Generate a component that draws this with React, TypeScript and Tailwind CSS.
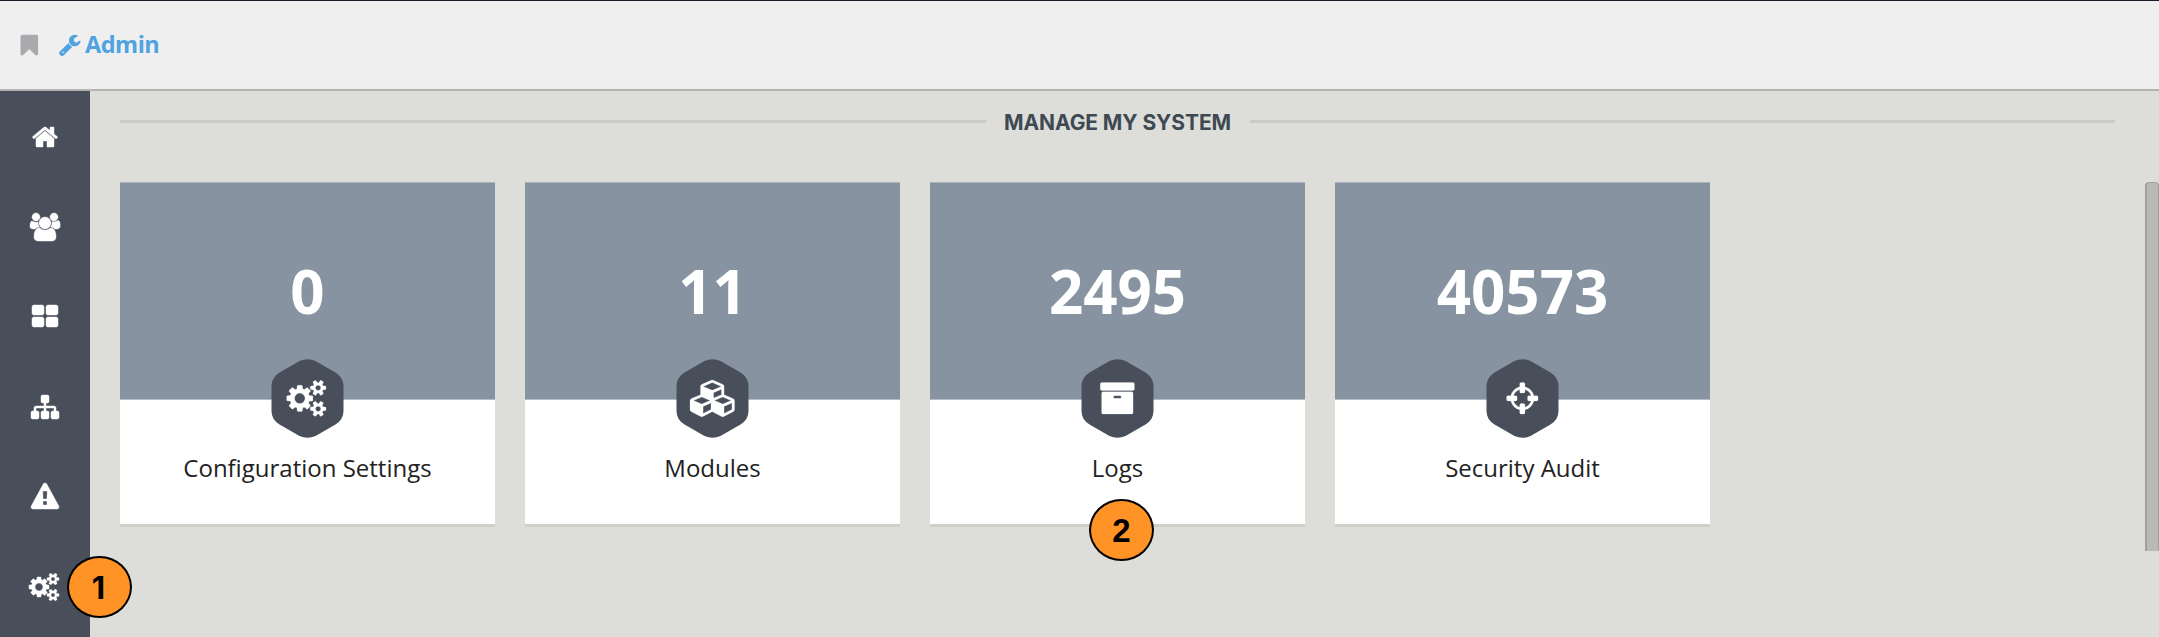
import React from 'react';

type Glyph = { w: number; d: string };

const glyphs: Record<string, Glyph> = {
  bookmark: {
    w: 1792,
    d: 'M1420 128q23 0 44 9 33 13 52.5 41t19.5 62v1289q0 34-19.5 62t-52.5 41q-19 8-44 8-48 0-83-32l-441-424-441 424q-36 33-83 33-23 0-44-9-33-13-52.5-41t-19.5-62v-1289q0-34 19.5-62t52.5-41q21-9 44-9h1048z',
  },
  wrench: {
    w: 1792,
    d: 'M448 1472q0-26-19-45t-45-19-45 19-19 45 19 45 45 19 45-19 19-45zm644-420l-682 682q-37 37-90 37-52 0-91-37l-106-108q-38-36-38-90 0-53 38-91l681-681q39 98 114.5 173.5t173.5 114.5zm634-435q0 39-23 106-47 134-164.5 217.5t-258.5 83.5q-185 0-316.5-131.5t-131.5-316.5 131.5-316.5 316.5-131.5q58 0 121.5 16.5t107.5 46.5q16 11 16 28t-16 28l-293 169v224l193 107q5-3 79-48.5t135.5-81 70.5-35.5q15 0 23.5 10t8.5 25z',
  },
  home: {
    w: 1792,
    d: 'M1472 992v480q0 26-19 45t-45 19h-384v-384h-256v384h-384q-26 0-45-19t-19-45v-480q0-1 .5-3t.5-3l575-474 575 474q1 2 1 6zm223-69l-62 74q-8 9-21 11h-3q-13 0-21-7l-692-577-692 577q-12 8-24 7-13-2-21-11l-62-74q-8-10-7-23.5t11-21.5l719-599q32-26 76-26t76 26l244 204v-195q0-14 9-23t23-9h192q14 0 23 9t9 23v408l219 182q10 8 11 21.5t-7 23.5z',
  },
  users: {
    w: 1920,
    d: 'M593 896q-162 5-265 128h-134q-82 0-138-40.5t-56-118.5q0-353 124-353 6 0 43.5 21t97.5 42.5 119 21.5q67 0 133-23-5 37-5 66 0 159 93 293zm1071 637q0 120-73 189.5t-194 69.5h-874q-121 0-194-69.5t-73-189.5q0-53 3.5-103.5t14-109 26.5-108.5 43-97.5 62-81 85.5-53.5 111.5-20q10 0 43 21.5t73 48 107 48 135 21.5 135-21.5 107-48 73-48 43-21.5q61 0 111.5 20t85.5 53.5 62 81 43 97.5 26.5 108.5 14 109 3.5 103.5zm-1024-1277q0 106-75 181t-181 75-181-75-75-181 75-181 181-75 181 75 75 181zm704 384q0 159-112.5 271.5t-271.5 112.5-271.5-112.5-112.5-271.5 112.5-271.5 271.5-112.5 271.5 112.5 112.5 271.5zm576 225q0 78-56 118.5t-138 40.5h-134q-103-123-265-128 93-134 93-293 0-29-5-66 66 23 133 23 59 0 119-21.5t97.5-42.5 43.5-21q124 0 124 353zm-128-609q0 106-75 181t-181 75-181-75-75-181 75-181 181-75 181 75 75 181z',
  },
  grid: {
    w: 1792,
    d: 'M832 1024v384q0 52-38 90t-90 38h-512q-52 0-90-38t-38-90v-384q0-52 38-90t90-38h512q52 0 90 38t38 90zm0-768v384q0 52-38 90t-90 38h-512q-52 0-90-38t-38-90v-384q0-52 38-90t90-38h512q52 0 90 38t38 90zm896 768v384q0 52-38 90t-90 38h-512q-52 0-90-38t-38-90v-384q0-52 38-90t90-38h512q52 0 90 38t38 90zm0-768v384q0 52-38 90t-90 38h-512q-52 0-90-38t-38-90v-384q0-52 38-90t90-38h512q52 0 90 38t38 90z',
  },
  sitemap: {
    w: 1792,
    d: 'M1792 1248v320q0 40-28 68t-68 28h-320q-40 0-68-28t-28-68v-320q0-40 28-68t68-28h96v-192h-512v192h96q40 0 68 28t28 68v320q0 40-28 68t-68 28h-320q-40 0-68-28t-28-68v-320q0-40 28-68t68-28h96v-192h-512v192h96q40 0 68 28t28 68v320q0 40-28 68t-68 28h-320q-40 0-68-28t-28-68v-320q0-40 28-68t68-28h96v-192q0-52 38-90t90-38h512v-192h-96q-40 0-68-28t-28-68v-320q0-40 28-68t68-28h320q40 0 68 28t28 68v320q0 40-28 68t-68 28h-96v192h512q52 0 90 38t38 90v192h96q40 0 68 28t28 68z',
  },
  warning: {
    w: 1792,
    d: 'M1024 1375v-190q0-14-9.5-23.5t-22.5-9.5h-192q-13 0-22.5 9.5t-9.5 23.5v190q0 14 9.5 23.5t22.5 9.5h192q13 0 22.5-9.5t9.5-23.5zm-2-374l18-459q0-12-10-19-13-11-24-11h-220q-11 0-24 11-10 7-10 21l17 457q0 10 10 16.5t24 6.5h185q14 0 23.5-6.5t10.5-16.5zm-14-934l768 1408q35 63-2 126-17 29-46.5 46t-63.5 17h-1536q-34 0-63.5-17t-46.5-46q-37-63-2-126l768-1408q17-31 47-49t65-18 65 18 47 49z',
  },
  cogs: {
    w: 1920,
    d: 'M832 896q0-106-75-181t-181-75-181 75-75 181 75 181 181 75 181-75 75-181zm768 512q0-52-38-90t-90-38-90 38-38 90q0 53 37.5 90.5t90.5 37.5 90.5-37.5 37.5-90.5zm0-1024q0-52-38-90t-90-38-90 38-38 90q0 53 37.5 90.5t90.5 37.5 90.5-37.5 37.5-90.5zm-384 421v185q0 10-7 19.5t-16 10.5l-155 24q-11 35-32 76 34 48 90 115 7 11 7 20 0 12-7 19-23 30-82.5 89.5t-78.5 59.5q-11 0-21-7l-115-90q-37 19-77 31-11 108-23 155-7 24-30 24h-186q-11 0-20-7.5t-10-17.5l-23-153q-34-10-75-31l-118 89q-7 7-20 7-11 0-21-8-144-133-144-160 0-9 7-19 10-14 41-53t47-61q-23-44-35-82l-152-24q-10-1-17-9.5t-7-19.5v-185q0-10 7-19.5t16-10.5l155-24q11-35 32-76-34-48-90-115-7-11-7-20 0-12 7-20 22-30 82-89t79-59q11 0 21 7l115 90q34-18 77-32 11-108 23-154 7-24 30-24h186q11 0 20 7.5t10 17.5l23 153q34 10 75 31l118-89q8-7 20-7 11 0 21 8 144 133 144 160 0 8-7 19-12 16-42 54t-45 60q23 48 34 82l152 23q10 2 17 10.5t7 19.5zm640 533v140q0 16-149 31-12 27-30 52 51 113 51 138 0 4-4 7-122 71-124 71-8 0-46-47t-52-68q-20 2-30 2t-30-2q-14 21-52 68t-46 47q-2 0-124-71-4-3-4-7 0-25 51-138-18-25-30-52-149-15-149-31v-140q0-16 149-31 13-29 30-52-51-113-51-138 0-4 4-7 4-2 35-20t59-34 30-16q8 0 46 46.5t52 67.5q20-2 30-2t30 2q51-71 92-112l6-2q4 0 124 70 4 3 4 7 0 25-51 138 17 23 30 52 149 15 149 31zm0-1024v140q0 16-149 31-12 27-30 52 51 113 51 138 0 4-4 7-122 71-124 71-8 0-46-47t-52-68q-20 2-30 2t-30-2q-14 21-52 68t-46 47q-2 0-124-71-4-3-4-7 0-25 51-138-18-25-30-52-149-15-149-31v-140q0-16 149-31 13-29 30-52-51-113-51-138 0-4 4-7 4-2 35-20t59-34 30-16q8 0 46 46.5t52 67.5q20-2 30-2t30 2q51-71 92-112l6-2q4 0 124 70 4 3 4 7 0 25-51 138 17 23 30 52 149 15 149 31z',
  },
  cubes: {
    w: 2176,
    d: 'M640 1632l384-192v-314l-384 164v342zm-64-454l404-173-404-173-404 173zm1088 454l384-192v-314l-384 164v342zm-64-454l404-173-404-173-404 173zm-448-293l384-165v-266l-384 164v267zm-64-379l441-189-441-189-441 189zm1088 518v416q0 36-19 67t-52 47l-448 224q-25 14-57 14t-57-14l-448-224q-4-2-7-4-2 2-7 4l-448 224q-25 14-57 14t-57-14l-448-224q-33-16-52-47t-19-67v-416q0-38 21.5-70t56.5-48l434-186v-400q0-38 21.5-70t56.5-48l448-192q23-10 50-10t50 10l448 192q35 16 56.5 48t21.5 70v400l434 186q36 16 57 48t21 70z',
  },
  archive: {
    w: 1792,
    d: 'M1088 832q0-26-19-45t-45-19h-256q-26 0-45 19t-19 45 19 45 45 19h256q26 0 45-19t19-45zm576-192v960q0 26-19 45t-45 19h-1408q-26 0-45-19t-19-45v-960q0-26 19-45t45-19h1408q26 0 45 19t19 45zm64-448v256q0 26-19 45t-45 19h-1536q-26 0-45-19t-19-45v-256q0-26 19-45t45-19h1536q26 0 45 19t19 45z',
  },
  crosshairs: {
    w: 1792,
    d: 'M1325 1024h-109q-26 0-45-19t-19-45v-128q0-26 19-45t45-19h109q-32-108-112.5-188.5t-188.5-112.5v109q0 26-19 45t-45 19h-128q-26 0-45-19t-19-45v-109q-108 32-188.5 112.5t-112.5 188.5h109q26 0 45 19t19 45v128q0 26-19 45t-45 19h-109q32 108 112.5 188.5t188.5 112.5v-109q0-26 19-45t45-19h128q26 0 45 19t19 45v109q108-32 188.5-112.5t112.5-188.5zm339-192v128q0 26-19 45t-45 19h-143q-37 161-154.5 278.5t-278.5 154.5v143q0 26-19 45t-45 19h-128q-26 0-45-19t-19-45v-143q-161-37-278.5-154.5t-154.5-278.5h-143q-26 0-45-19t-19-45v-128q0-26 19-45t45-19h143q37-161 154.5-278.5t278.5-154.5v-143q0-26 19-45t45-19h128q26 0 45 19t19 45v143q161 37 278.5 154.5t154.5 278.5h143q26 0 45 19t19 45z',
  },
};

function Icon({ name, className }: { name: string; className: string }) {
  const g = glyphs[name];
  return (
    <svg
      viewBox={`0 0 ${g.w} 1792`}
      className={`w-auto shrink-0 overflow-visible fill-current stroke-current ${className}`}
    >
      <path d={g.d} />
    </svg>
  );
}

const nav = ['home', 'users', 'grid', 'sitemap', 'warning', 'cogs'];

const cards = [
  { count: '0', icon: 'cogs', label: 'Configuration Settings' },
  { count: '11', icon: 'cubes', label: 'Modules' },
  { count: '2495', icon: 'archive', label: 'Logs' },
  { count: '40573', icon: 'crosshairs', label: 'Security Audit' },
];

function Card({ count, icon, label }: { count: string; icon: string; label: string }) {
  return (
    <div className="relative flex h-[342px] w-[375px] flex-col bg-white shadow-[0_3px_0_#cfd0ca]">
      <div className="flex h-[218px] items-center justify-center border-y border-t-[#a9b1b8] border-b-[#b4bcc5] bg-[#8793a1] text-[60px] leading-none font-bold text-white">
        {count}
      </div>
      <div className="flex flex-1 justify-center pt-[51px] text-[24px] leading-[34px] text-[#222]">{label}</div>
      <div className="absolute top-[177px] left-[151px] flex h-[79px] w-[73px] items-center justify-center text-white">
        <svg viewBox="-0.5 0 73 79" className="absolute inset-0 size-full fill-[#484f5b]">
          <path d="M28 2Q36-1.6 44 2L64 13.5Q72 18.5 72 27V52Q72 60.5 64 65.5L44 77Q36 80.6 28 77L8 65.5Q0 60.5 0 52V27Q0 18.5 8 13.5Z" />
        </svg>
        <Icon name={icon} className="relative h-[36.7px] stroke-[10]" />
      </div>
    </div>
  );
}

function Callout({ children, className }: { children: React.ReactNode; className: string }) {
  return (
    <div
      className={`absolute flex h-[62px] w-[65px] items-center justify-center rounded-[50%] border-2 border-black bg-[#ff9326] leading-none font-bold text-black ${className}`}
    >
      {children}
    </div>
  );
}

export default function App() {
  return (
    <div className="relative flex h-[637px] w-[2159px] flex-col overflow-hidden bg-[#dddeda] font-['Open_Sans',sans-serif]">
      <header className="flex h-[91px] shrink-0 items-center border-t border-b-2 border-t-[#1b1a26] border-b-[#b4b4b4] bg-[#efefef]">
        <Icon name="bookmark" className="ml-[17px] h-[24.6px] stroke-0 text-[#a9aaae]" />
        <Icon name="wrench" className="ml-[16px] h-[23.4px] stroke-0 text-[#4fa3e0]" />
        <span className="ml-[4px] text-[23.5px] leading-none font-bold tracking-[-0.5px] text-[#4fa3e0]">Admin</span>
      </header>
      <div className="flex min-h-0 flex-1">
        <nav className="flex w-[90px] shrink-0 flex-col bg-[#484f5b] pt-[1px] text-white">
          {nav.map((name) => (
            <div key={name} className="flex h-[90px] shrink-0 items-center justify-center">
              <Icon name={name} className="h-[28px] stroke-[28]" />
            </div>
          ))}
        </nav>
        <main className="flex flex-1 flex-col pl-[30px]">
          <div className="flex h-[91px] items-start pr-[44px]">
            <div className="mt-[29px] h-[3px] flex-1 bg-[#c7cbca]" />
            <h1 className="mt-[19px] w-[264px] text-center font-['Inter',sans-serif] text-[21px] leading-[26px] font-bold tracking-[-0.1px] whitespace-nowrap text-[#3f4952]">
              MANAGE MY SYSTEM
            </h1>
            <div className="mt-[29px] h-[3px] flex-1 bg-[#c7cbca]" />
          </div>
          <div className="flex justify-between">
            <div className="flex gap-[30px]">
              {cards.map((c) => (
                <Card key={c.label} {...c} />
              ))}
            </div>
            <div className="h-[369px] w-[14px] rounded-t-[4px] border-t border-r border-l-2 border-[#a0a19e] bg-[#b9bab5]" />
          </div>
        </main>
      </div>
      <Callout className="top-[556px] left-[67px] pr-[2px] font-['Inter',sans-serif] text-[31px]">1</Callout>
      <Callout className="top-[499px] left-[1089px] font-['Liberation_Sans',sans-serif] text-[33px]">2</Callout>
    </div>
  );
}
